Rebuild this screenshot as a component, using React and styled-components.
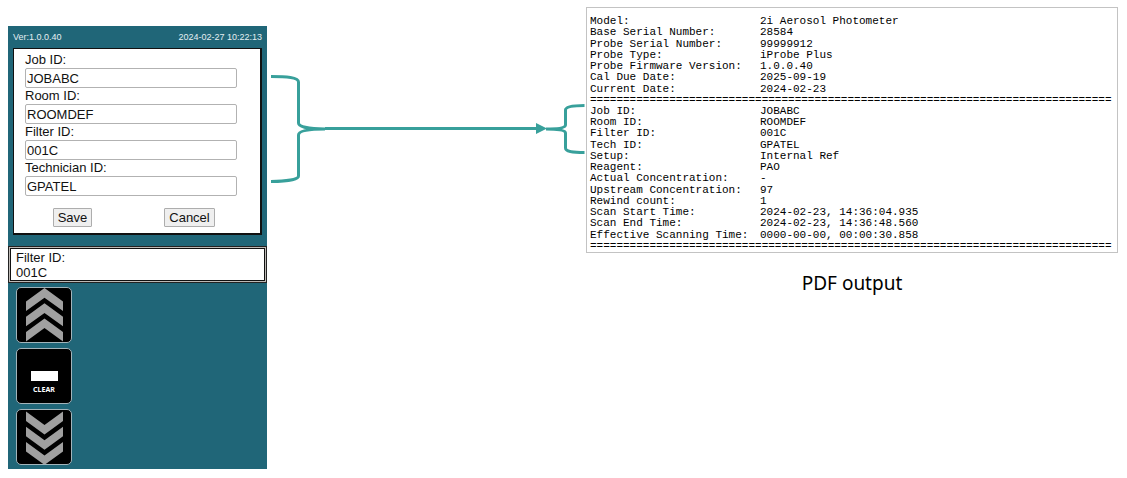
import React from "react";
import styled, { createGlobalStyle } from "styled-components";

const TEAL = "#38a09b";

const GlobalStyle = createGlobalStyle`
  *, *::before, *::after { box-sizing: border-box; }
  body {
    margin: 0;
    background: #fff;
    color: #111;
    font-family: "Liberation Sans", Arial, sans-serif;
    font-size: 13px;
  }
`;

const Page = styled.main`
  display: grid;
  grid-template-columns: minmax(259px, 23%) minmax(120px, 1fr) minmax(532px, 47%);
  align-items: start;
  padding: 7px 9px 9px 8px;
`;

const Device = styled.section`
  margin-top: 19px;
  padding-bottom: 4px;
  background: #206678;
`;

const StatusBar = styled.header`
  display: flex;
  justify-content: space-between;
  padding: 6px 5px 5px;
  color: #e4eef2;
  font-size: 9px;
  line-height: 11px;
`;

const JobForm = styled.form`
  margin: 0 5px;
  padding: 3px 12px 6px 0;
  background: #fff;
  border: 1px solid #111;
  border-right-width: 2px;
  border-bottom-width: 2px;
`;

const Field = styled.div`
  padding: 0 11px;
`;

const FieldLabel = styled.label`
  display: block;
  line-height: 16px;
`;

const TextInput = styled.input`
  display: block;
  width: 100%;
  height: 20px;
  padding: 0 1px;
  border: 1px solid #b2b2b2;
  border-radius: 2px;
  background: #fff;
  color: #111;
  font: inherit;
`;

const FormActions = styled.div`
  display: grid;
  grid-template-columns: 1fr 1fr;
  justify-items: center;
  padding-top: 12px;
`;

const FormButton = styled.button`
  height: 19px;
  padding: 0 4px;
  border: 1px solid #adadad;
  border-radius: 1px;
  background: #efefef;
  color: #111;
  font: inherit;
  line-height: 17px;
`;

const ReadoutFrame = styled.div`
  margin-top: 11px;
  padding: 1px;
  border: 1px solid #222;
  background: #bdb9b5;
`;

const Readout = styled.div`
  padding: 1px 5px 0;
  border: 1px solid #111;
  background: #fff;
  line-height: 15px;
`;

const Keypad = styled.div`
  display: flex;
  flex-direction: column;
  gap: 5px;
  padding: 4px 8px 0;
`;

const Key = styled.button`
  display: flex;
  flex-direction: column;
  align-items: center;
  width: 56px;
  height: 56px;
  padding: ${(p) => (p.$labelled ? "22px 0 0" : "0")};
  border: 1px solid #a3b4ba;
  border-radius: 5px;
  background: #000;
  color: #fff;
  font: bold 7px/9px "Noto Sans", sans-serif;
`;

const KeyIcon = styled.svg`
  display: block;
  width: 54px;
  height: 54px;
`;

const KeyBar = styled.span`
  width: 27px;
  height: 10px;
  margin-bottom: 4px;
  background: #fff;
`;

const Connector = styled.div`
  display: flex;
  align-items: center;
  margin-top: 61px;
  padding-left: 3px;
`;

const Brace = styled.svg`
  flex: none;
  display: block;
`;

const ConnectorLine = styled.div`
  flex: 1;
  height: 3px;
  background: ${TEAL};
`;

const Output = styled.figure`
  margin: 0;
`;

const Sheet = styled.div`
  padding: 8px 3px 0;
  border: 1px solid #c3c3c3;
`;

const ReportTable = styled.table`
  width: 100%;
  height: 236px;
  border-collapse: collapse;
  table-layout: fixed;
  color: #000;
  font: 11px/11px "Liberation Mono", "Courier New", monospace;
  white-space: pre;
`;

const Name = styled.th`
  padding: 0;
  font-weight: normal;
  text-align: left;
`;

const Value = styled.td`
  padding: 0;
`;

const NameColumn = styled.col`
  width: 170px;
`;

const Caption = styled.figcaption`
  padding-top: 17px;
  color: #000;
  font: 19px/26px "Noto Sans", sans-serif;
  text-align: center;
`;

const fields = [
  ["job", "Job ID:", "JOBABC"],
  ["room", "Room ID:", "ROOMDEF"],
  ["filter", "Filter ID:", "001C"],
  ["technician", "Technician ID:", "GPATEL"],
];

const instrument = [
  ["Model:", "2i Aerosol Photometer"],
  ["Base Serial Number:", "28584"],
  ["Probe Serial Number:", "99999912"],
  ["Probe Type:", "iProbe Plus"],
  ["Probe Firmware Version:", "1.0.0.40"],
  ["Cal Due Date:", "2025-09-19"],
  ["Current Date:", "2024-02-23"],
];

const scan = [
  ["Job ID:", "JOBABC"],
  ["Room ID:", "ROOMDEF"],
  ["Filter ID:", "001C"],
  ["Tech ID:", "GPATEL"],
  ["Setup:", "Internal Ref"],
  ["Reagent:", "PAO"],
  ["Actual Concentration:", "-"],
  ["Upstream Concentration:", "97"],
  ["Rewind count:", "1"],
  ["Scan Start Time:", "2024-02-23, 14:36:04.935"],
  ["Scan End Time:", "2024-02-23, 14:36:48.560"],
  ["Effective Scanning Time:", "0000-00-00, 00:00:30.858"],
];

function Chevrons({ down }) {
  const shape = down ? "M9 1.5 27.5 15 46 1.5V11L27.5 24.5 9 11Z" : "M9 13.5 27.5 0 46 13.5V23L27.5 9.7 9 23Z";
  return (
    <KeyIcon viewBox="0 0 54 54" fill="#a0a0a0" aria-hidden="true">
      {[0, 15.2, 30.4].map((y) => (
        <path key={y} d={shape} transform={`translate(0 ${y})`} />
      ))}
    </KeyIcon>
  );
}

function ReportSection({ rows }) {
  return (
    <tbody>
      {rows.map(([name, value]) => (
        <tr key={name}>
          <Name scope="row">{name}</Name>
          <Value>{value}</Value>
        </tr>
      ))}
      <tr>
        <Value colSpan={2}>{"=".repeat(79)}</Value>
      </tr>
    </tbody>
  );
}

export default function App() {
  return (
    <>
      <GlobalStyle />
      <Page>
        <Device>
          <StatusBar>
            <span>Ver:1.0.0.40</span>
            <time>2024-02-27 10:22:13</time>
          </StatusBar>
          <JobForm onSubmit={(e) => e.preventDefault()}>
            {fields.map(([id, label, value]) => (
              <Field key={id}>
                <FieldLabel htmlFor={id}>{label}</FieldLabel>
                <TextInput id={id} type="text" defaultValue={value} />
              </Field>
            ))}
            <FormActions>
              <FormButton type="submit">Save</FormButton>
              <FormButton type="button">Cancel</FormButton>
            </FormActions>
          </JobForm>
          <ReadoutFrame>
            <Readout>
              <div>Filter ID:</div>
              <div>001C</div>
            </Readout>
          </ReadoutFrame>
          <Keypad>
            <Key type="button" aria-label="Up">
              <Chevrons />
            </Key>
            <Key type="button" $labelled>
              <KeyBar />
              CLEAR
            </Key>
            <Key type="button" aria-label="Down">
              <Chevrons down />
            </Key>
          </Keypad>
        </Device>

        <Connector aria-hidden="true">
          <Brace width="55" height="121" viewBox="0 0 55 121" fill="none" stroke={TEAL} strokeWidth="3">
            <path d="M1 8.5C16 8.5 28.500 9.500 28.500 14V55C28.500 58.500 38 61 55 61C38 61 28.500 63 28.500 67V108C28.500 111.500 16 113.500 1 113.500" />
          </Brace>
          <ConnectorLine />
          <Brace width="51" height="121" viewBox="0 0 51 121" fill="none" stroke={TEAL} strokeWidth="3">
            <path d="M0 60.500H3" />
            <path d="M1 55 12 60.500 1 66Z" fill={TEAL} stroke="none" />
            <path d="M11 61C23 61 30.500 60 30.500 57V42C30.500 39 37 37.500 49.500 37.500M11 61C23 61 30.500 62 30.500 65V80C30.500 83.500 37 84.500 49.500 84.500" />
          </Brace>
        </Connector>

        <Output>
          <Sheet>
            <ReportTable>
              <colgroup>
                <NameColumn />
                <col />
              </colgroup>
              <ReportSection rows={instrument} />
              <ReportSection rows={scan} />
            </ReportTable>
          </Sheet>
          <Caption>PDF output</Caption>
        </Output>
      </Page>
    </>
  );
}
